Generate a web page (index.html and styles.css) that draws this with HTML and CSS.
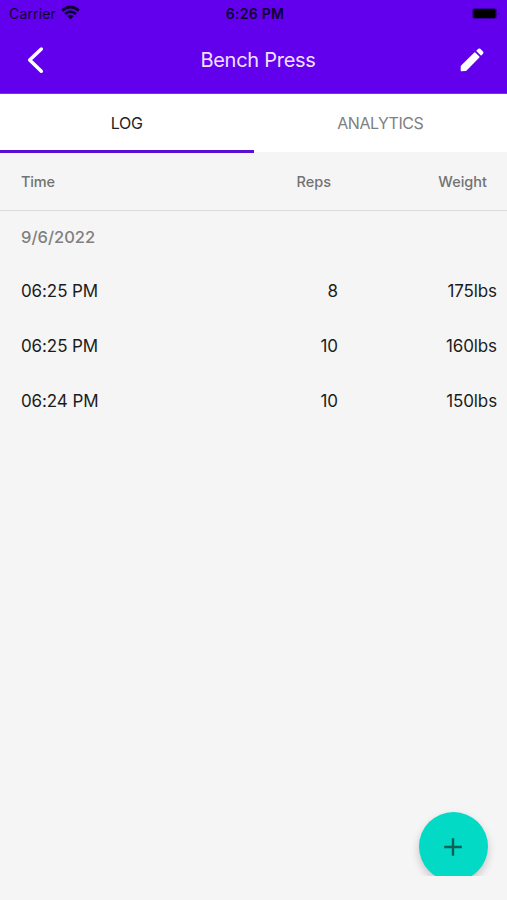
FILE: index.html
```html
<!DOCTYPE html>
<html lang="en">
<head>
<meta charset="utf-8">
<title>Bench Press</title>
<link rel="stylesheet" href="styles.css">
</head>
<body>
<div class="screen">
  <header class="header">
    <div class="status">
      <div class="carrier"><span class="carrier-name">Carrier</span>
        <svg class="wifi" width="19" height="15" viewBox="0 0 19 15"><g fill="none" stroke="#0b0030" stroke-width="2.8"><path d="M1.2 5.6Q9.5-1.6 17.8 5.6"/><path d="M4 9Q9.5 4.2 15 9"/></g><path d="M6.3 11Q9.5 8.4 12.7 11L9.5 14.3Z" fill="#0b0030"/></svg>
      </div>
      <span class="clock">6:26 PM</span>
      <svg class="battery" width="30" height="13" viewBox="0 0 30 13"><rect x="1" y="1" width="25" height="11" rx="3" fill="#3b00a5"/><rect x="2.5" y="2" width="22" height="9" rx="1.5" fill="#000"/><path d="M27.3 5.2Q29.5 6.5 27.3 8.2Z" fill="#3b00a5"/></svg>
    </div>
    <div class="toolbar">
      <svg class="back" width="18" height="28" viewBox="0 0 18 28"><path d="M15.3 3L3.7 14L15.3 25.2" fill="none" stroke="#fff" stroke-width="3.5" stroke-linecap="round" stroke-linejoin="round"/></svg>
      <h1 class="title">Bench Press</h1>
      <svg class="edit" width="24" height="24" viewBox="0 0 24 24"><path fill="#fff" stroke="#fff" stroke-width="1.4" stroke-linejoin="round" d="M1.4 18.2L14.8 5L18.9 9.1L5.6 22.4L1.4 22.6ZM17.1 2.8L18.6 1.4Q19.3.9 20 1.4L22.5 3.9Q23 4.6 22.5 5.3L21.1 6.8Z"/></svg>
    </div>
  </header>
  <nav class="tabs">
    <span class="tab active">LOG</span>
    <span class="tab analytics">ANALYTICS</span>
  </nav>
  <main class="content">
    <div class="row head"><span class="time">Time</span><span class="reps">Reps</span><span class="weight">Weight</span></div>
    <div class="date"><span>9/6/2022</span></div>
    <div class="row"><span class="time">06:25 PM</span><span class="reps">8</span><span class="weight">175lbs</span></div>
    <div class="row"><span class="time">06:25 PM</span><span class="reps">10</span><span class="weight">160lbs</span></div>
    <div class="row"><span class="time">06:24 PM</span><span class="reps">10</span><span class="weight">150lbs</span></div>
    <div class="fab"><svg width="20" height="20" viewBox="0 0 20 20"><path d="M10 1.2V18.8M1.2 10H18.8" stroke="#0b6259" stroke-width="2.4"/></svg></div>
  </main>
</div>
</body>
</html>
```
FILE: styles.css
```css
* { box-sizing: border-box; }
body { margin: 0; background: #f5f5f5; font-family: Inter, "Liberation Sans", sans-serif; color: #1c1c1c; }
.screen { width: 507px; height: 900px; background: #f5f5f5; }
.header { height: 94px; background: #6200ee; border-bottom: 1px solid #7a31ea; }
.status { height: 27px; display: grid; grid-template-columns: 1fr auto 1fr; align-items: center; padding: 0 6px 0 9px; color: #0b0030; font-size: 14px; line-height: 27px; }
.carrier { display: flex; align-items: center; gap: 5px; }
.carrier-name { letter-spacing: .15px; }
.wifi { margin-top: -2px; }
.clock { font-weight: 600; font-size: 14px; letter-spacing: .3px; }
.battery { justify-self: end; }
.toolbar { height: 66px; display: grid; grid-template-columns: 1fr auto 1fr; align-items: center; padding: 0 23px 0 26px; }
.title { margin: 0 0 0 6px; font-size: 20px; font-weight: 400; letter-spacing: -.27px; color: #f1e0ff; line-height: 28px; }
.edit { justify-self: end; }
.tabs { height: 58px; display: flex; background: #fff; }
.tab { flex: 1; text-align: center; font-size: 16px; line-height: 59px; letter-spacing: -.2px; color: #808080; }
.analytics { letter-spacing: -.5px; }
.active { color: #222; box-shadow: inset 0 -2px #5b0fd6, 0 1px #5b0fd6; }
.content { position: relative; height: 724px; overflow: hidden; }
.row { display: grid; grid-template-columns: 190px 148px 1fr; align-items: center; height: 55px; padding: 0 10px 0 0; font-size: 17px; letter-spacing: -.1px; }
.time { padding-left: 21px; }
.reps, .weight { text-align: right; }
.head { height: 59px; padding-top: 1px; border-bottom: 1px solid #dcdcdc; font-size: 14.5px; font-weight: 500; letter-spacing: 0; color: #727272; }
.head .time { letter-spacing: -.2px; }
.head .reps { padding-right: 7px; }
.head .weight { padding-right: 10px; }
.date { height: 52px; padding-left: 21px; font-size: 16.5px; font-weight: 500; line-height: 52px; color: #808080; }
.fab { position: absolute; left: 418.5px; top: 660px; width: 69px; height: 69px; border-radius: 50%; background: #03dac5; display: flex; align-items: center; justify-content: center; box-shadow: 0 4px 8px rgba(0,0,0,.2); }
```
